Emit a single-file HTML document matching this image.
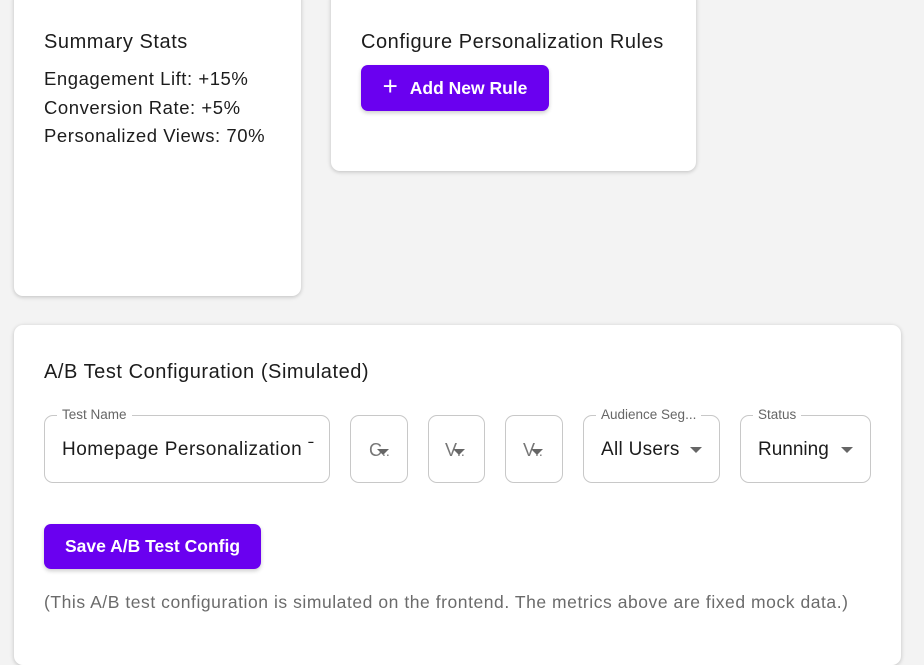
<!DOCTYPE html><html><head><style>
body{margin:0;width:924px;height:626px;overflow:hidden;background:#f3f3f3;font-family:"Liberation Sans",sans-serif;color:#1c1c1c;position:relative}
.card{position:absolute;background:#fff;border-radius:9px;box-shadow:0 1px 4px rgba(0,0,0,.22)}
.t{position:absolute;white-space:nowrap;letter-spacing:0.55px}
.btn{position:absolute;background:#6a00f0;color:#fff;border-radius:7px;font-weight:bold;font-size:17.5px;box-shadow:0 2px 4px rgba(0,0,0,.2);display:flex;align-items:center;justify-content:center}
.f{position:absolute;top:415px;height:68px;border:1px solid #c8c8c8;border-radius:9px;box-sizing:border-box}
.lab{position:absolute;top:-9px;left:12px;background:#fff;padding:0 5px;font-size:13.5px;color:#666;white-space:nowrap}
.val{position:absolute;top:23px;left:17px;font-size:19px;white-space:nowrap}
.tri{position:absolute;width:0;height:0;border-left:6px solid transparent;border-right:6px solid transparent;border-top:6px solid #666}
.sm{position:absolute;top:24px;font-size:18px;color:#777}
</style></head><body>
<div class="card" style="left:14px;top:-10px;width:287px;height:306px"></div>
<div class="card" style="left:331px;top:-10px;width:365px;height:181px"></div>
<div class="card" style="left:14px;top:325px;width:887px;height:340px"></div>
<div class="t" style="left:44px;top:31px;font-size:20px">Summary Stats</div>
<div class="t" style="left:44px;top:65px;font-size:18.5px;line-height:28.5px">Engagement Lift: +15%<br>Conversion Rate: +5%<br>Personalized Views: 70%</div>
<div class="t" style="left:361px;top:31px;font-size:20px">Configure Personalization Rules</div>
<div class="btn" style="left:361px;top:65px;width:188px;height:46px"><span style="font-size:26px;font-weight:normal;margin-right:12px;margin-top:-3px">+</span>Add New Rule</div>
<div class="t" style="left:44px;top:361px;font-size:20px">A/B Test Configuration (Simulated)</div>
<div class="f" style="left:44px;width:286px"><div class="lab">Test Name</div><div class="val" style="letter-spacing:0.5px">Homepage Personalization ˉ</div></div>
<div class="f" style="left:350px;width:58px"><div class="sm" style="left:18px">C<span style="font-size:14px">..</span></div><div class="tri" style="left:26px;top:33px"></div></div>
<div class="f" style="left:428px;width:57px"><div class="sm" style="left:16px">V<span style="font-size:14px">..</span></div><div class="tri" style="left:24px;top:33px"></div></div>
<div class="f" style="left:505px;width:58px"><div class="sm" style="left:17px">V<span style="font-size:14px">..</span></div><div class="tri" style="left:25px;top:33px"></div></div>
<div class="f" style="left:583px;width:137px"><div class="lab">Audience Seg...</div><div class="val" style="letter-spacing:0.3px">All Users</div><div class="tri" style="left:106px;top:31px"></div></div>
<div class="f" style="left:740px;width:131px"><div class="lab">Status</div><div class="val">Running</div><div class="tri" style="left:100px;top:31px"></div></div>
<div class="btn" style="left:44px;top:524px;width:217px;height:45px">Save A/B Test Config</div>
<div class="t" style="left:44px;top:592px;font-size:17.5px;color:#6b6b6b;letter-spacing:0.55px">(This A/B test configuration is simulated on the frontend. The metrics above are fixed mock data.)</div>
</body></html>
